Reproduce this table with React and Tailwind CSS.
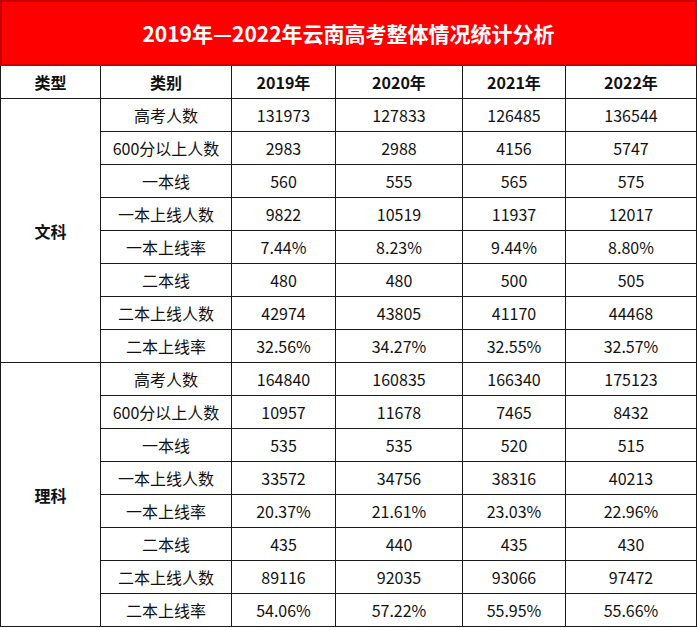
import React from 'react';

const years = ['2019年', '2020年', '2021年', '2022年'];

const groups = [
  {
    name: '文科',
    rows: [
      ['高考人数', '131973', '127833', '126485', '136544'],
      ['600分以上人数', '2983', '2988', '4156', '5747'],
      ['一本线', '560', '555', '565', '575'],
      ['一本上线人数', '9822', '10519', '11937', '12017'],
      ['一本上线率', '7.44%', '8.23%', '9.44%', '8.80%'],
      ['二本线', '480', '480', '500', '505'],
      ['二本上线人数', '42974', '43805', '41170', '44468'],
      ['二本上线率', '32.56%', '34.27%', '32.55%', '32.57%'],
    ],
  },
  {
    name: '理科',
    rows: [
      ['高考人数', '164840', '160835', '166340', '175123'],
      ['600分以上人数', '10957', '11678', '7465', '8432'],
      ['一本线', '535', '535', '520', '515'],
      ['一本上线人数', '33572', '34756', '38316', '40213'],
      ['一本上线率', '20.37%', '21.61%', '23.03%', '22.96%'],
      ['二本线', '435', '440', '435', '430'],
      ['二本上线人数', '89116', '92035', '93066', '97472'],
      ['二本上线率', '54.06%', '57.22%', '55.95%', '55.66%'],
    ],
  },
];

const cell = 'h-[33px] flex items-center justify-center border-r border-b border-[#1a1a1a]';

export default function App() {
  return (
    <div
      className="w-[697px] h-[628px] bg-white text-[#111] overflow-hidden"
      style={{ fontFamily: '"Noto Sans CJK SC", "Noto Sans", sans-serif' }}
    >
      <div className="h-[66px] bg-[#ff0000] border-2 border-[#c40000] flex items-center justify-center">
        <span className="text-white font-bold text-[21px] pt-[1px]">
          2019年—2022年云南高考整体情况统计分析
        </span>
      </div>

      <div className="grid grid-cols-[100px_131px_104px_127px_103px_131px] border-l border-[#1a1a1a] w-[697px] text-[16px]">
        <div className={`${cell} font-bold`}>类型</div>
        <div className={`${cell} font-bold`}>类别</div>
        {years.map((y) => (
          <div key={y} className={`${cell} font-bold`}>{y}</div>
        ))}

        {groups.map((g, gi) => (
          <React.Fragment key={g.name}>
            <div
              className="flex items-center justify-center border-r border-b border-[#1a1a1a] font-bold"
              style={{ gridRow: `${2 + gi * 8} / span 8`, gridColumn: '1' }}
            >
              {g.name}
            </div>
            {g.rows.map((r, ri) => (
              <React.Fragment key={ri}>
                {r.map((v, ci) => (
                  <div
                    key={ci}
                    className={cell}
                    style={{ gridRow: `${2 + gi * 8 + ri}`, gridColumn: `${ci + 2}` }}
                  >
                    {v}
                  </div>
                ))}
              </React.Fragment>
            ))}
          </React.Fragment>
        ))}
      </div>
    </div>
  );
}
